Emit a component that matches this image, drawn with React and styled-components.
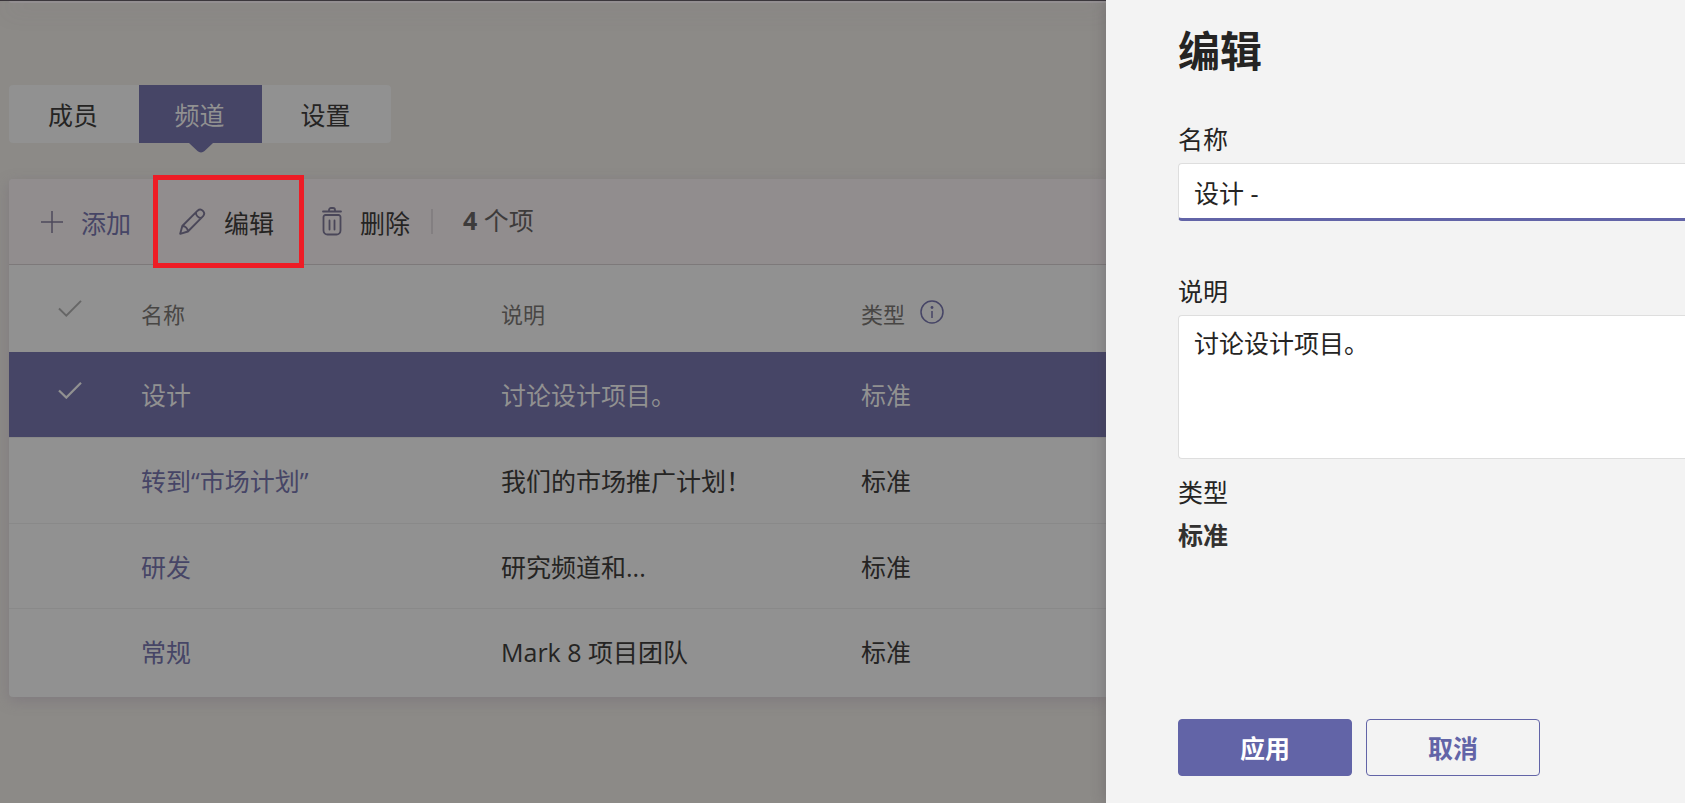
import React from "react";
import styled, { createGlobalStyle } from "styled-components";

const Global = createGlobalStyle`
  * { box-sizing: border-box; }
  body {
    margin: 0;
    background: #fff;
    color: #252423;
    font: 25px/34px "Open Sans", "Noto Sans CJK SC", sans-serif;
  }
  button, input, textarea { font: inherit; color: inherit; margin: 0; }
`;

const Page = styled.div`
  display: grid;
  grid-template-columns: minmax(0, 1106fr) minmax(0, 579fr);
  min-height: 100vh;
  overflow: hidden;
  border: solid #fff;
  border-width: 0 3px 1px 0;
`;

const Main = styled.main`
  display: flex;
  flex-direction: column;
  min-width: 0;
  overflow: hidden;
  background: #8c8a87;
`;

const TopBar = styled.div`
  height: 1px;
  background: #3a363b;
`;

const HeaderCard = styled.div`
  height: 2px;
  margin-left: 9px;
  border-bottom-left-radius: 4px;
  background: #938f91;
  box-shadow: 0 4px 20px rgba(110, 100, 115, 0.5);
`;

const Tabs = styled.div`
  display: flex;
  align-self: flex-start;
  margin: 82px 0 36px 9px;
  background: #919191;
  border-radius: 4px;
`;

const Tab = styled.button`
  position: relative;
  width: ${(p) => p.$width}px;
  height: 58px;
  padding: 2px 2px 0 0;
  border: 0;
  background: ${(p) => (p.$active ? "#464566" : "transparent")};
  color: ${(p) => (p.$active ? "#919191" : "#252423")};
`;

const TabArrow = styled.svg`
  position: absolute;
  top: 100%;
  left: 50%;
  margin-left: -12px;
  fill: #464566;
`;

const Card = styled.section`
  margin-left: 9px;
  background: #919191;
  border-radius: 4px 0 0 4px;
  box-shadow: 0 4px 14px rgba(110, 100, 115, 0.4);
`;

const Toolbar = styled.div`
  display: flex;
  align-items: center;
  height: 86px;
  background: #918d8e;
  border-bottom: 1px solid #7d797a;
  border-radius: 4px 0 0 0;
`;

const Action = styled.button`
  position: relative;
  display: flex;
  align-items: center;
  gap: 18px;
  height: 50px;
  padding: 2px 0 0;
  margin-left: ${(p) => p.$left}px;
  border: 0;
  background: none;
  color: ${(p) => (p.$accent ? "#464566" : "#252423")};
  svg { margin-top: -2px; }
`;

const Highlight = styled.span`
  position: absolute;
  inset: -22px -30px -21px -26px;
  border: 5px solid #ee1c25;
  pointer-events: none;
`;

const Divider = styled.span`
  width: 2px;
  height: 25px;
  margin-left: 21px;
  background: #837f81;
`;

const Count = styled.span`
  margin: 0 0 4px 30px;
  color: #3d3b3b;
  word-break: keep-all;
`;

const Table = styled.table`
  width: 100%;
  border-collapse: collapse;
  table-layout: fixed;
`;

const CheckCol = styled.col`
  width: 132px;
`;

const DataCol = styled.col`
  width: 360px;
`;

const HeadCell = styled.th`
  height: 87px;
  padding: 10px 0 0;
  text-align: left;
  font-size: 22px;
  font-weight: 400;
  color: #484644;
`;

const HeadLabel = styled.span`
  display: flex;
  align-items: center;
  gap: 15px;
  svg { margin-top: -4px; }
`;

const Row = styled.tr`
  height: ${(p) => p.$height}px;
  background: ${(p) => (p.$selected ? "#464566" : "transparent")};
  color: ${(p) => (p.$selected ? "#919191" : "#252423")};
  & + & { border-top: 1px solid #898989; }
  &:last-child td { padding-bottom: 4px; }
`;

const Cell = styled.td`
  padding: 2px 0 0;
  white-space: nowrap;
`;

const CheckCell = styled.td`
  padding: 0 0 8px 49px;
  line-height: 0;
  text-align: left;
`;

const HeadCheckCell = styled.th`
  padding: 0 0 0 49px;
  line-height: 0;
  text-align: left;
`;

const NameLink = styled.a`
  color: ${(p) => (p.$selected ? "inherit" : "#464566")};
  text-decoration: none;
`;

const Panel = styled.aside`
  position: relative;
  display: flex;
  flex-direction: column;
  min-width: 0;
  padding: 25px 0 27px 72px;
  background: #f3f3f3;
  box-shadow: 0 0 14px rgba(60, 50, 60, 0.3);
`;

const Title = styled.h1`
  margin: 0 0 45px;
  font-size: 42px;
  line-height: 52px;
  font-weight: 700;
`;

const Label = styled.label`
  margin-bottom: 7px;
`;

const TextInput = styled.input`
  height: 58px;
  margin-bottom: 53px;
  padding: 1px 15px 0;
  background: #fff;
  border: 1px solid #dedede;
  border-right: 0;
  border-bottom: 3px solid #6264a7;
  border-radius: 4px 0 0 4px;
  outline: 0;
`;

const TextBox = styled.textarea`
  height: 144px;
  margin-bottom: 16px;
  padding: 10px 15px;
  background: #fff;
  border: 1px solid #dedede;
  border-right: 0;
  border-radius: 4px 0 0 4px;
  outline: 0;
  resize: none;
`;

const TypeList = styled.dl`
  margin: 0;
  dt { margin-bottom: 9px; }
  dd { margin: 0; font-weight: 700; color: #323130; }
`;

const Buttons = styled.div`
  display: flex;
  gap: 14px;
  margin-top: auto;
`;

const Button = styled.button`
  width: 174px;
  height: 57px;
  border: 1px solid #6264a7;
  border-radius: 4px;
  font-weight: 700;
  background: ${(p) => (p.$primary ? "#6264a7" : "transparent")};
  color: ${(p) => (p.$primary ? "#fff" : "#6264a7")};
`;

const PlusIcon = () => (
  <svg width="22" height="22" viewBox="0 0 22 22" fill="none" stroke="#4d4a5c" strokeWidth="1.5">
    <path d="M11 0v22M0 11h22" />
  </svg>
);

const PencilIcon = () => (
  <svg width="27" height="27" viewBox="0 0 27 27" fill="none" stroke="#4a4759" strokeWidth="1.900" strokeLinejoin="round">
    <path d="M1.200 25.800 3.300 18 18.600 2.700a3.900 3.900 0 0 1 5.500 5.500L8.900 23.500ZM3.300 18a5.600 5.600 0 0 1 5.600 5.500M16.900 4.500a5.600 5.600 0 0 0 5.400 5.400" />
  </svg>
);

const TrashIcon = () => (
  <svg width="20" height="29" viewBox="0 0 20 29" fill="none" stroke="#4a4759" strokeWidth="1.800" strokeLinecap="round">
    <path d="M1 4.500h18M7 4.500V3a2 2 0 0 1 2-2h2a2 2 0 0 1 2 2v1.500M1.500 10v13.500a4 4 0 0 0 4 4h9a4 4 0 0 0 4-4V10a2 2 0 0 0-2-2h-13a2 2 0 0 0-2 2ZM7.500 13.500v9M12.500 13.500v9" />
  </svg>
);

const CheckIcon = ({ color, weight }) => (
  <svg width="24" height="17" viewBox="0 0 24 17" fill="none" stroke={color} strokeWidth={weight}>
    <path d="M1 8.500 8.300 15.600 23 .8" />
  </svg>
);

const InfoIcon = () => (
  <svg width="24" height="24" viewBox="0 0 24 24" fill="none" stroke="#464566" strokeWidth="1.5">
    <circle cx="12" cy="12" r="11" />
    <path d="M12 11v7" />
    <circle cx="12" cy="7.500" r="1.400" fill="#464566" stroke="none" />
  </svg>
);

const channels = [
  { name: "设计", description: "讨论设计项目。", selected: true, height: 85 },
  { name: "转到“市场计划”", description: "我们的市场推广计划！", height: 86 },
  { name: "研发", description: "研究频道和...", height: 85 },
  { name: "常规", description: "Mark 8 项目团队", height: 89 },
];

export default function App() {
  return (
    <Page lang="zh-CN">
      <Global />
      <Main>
        <TopBar />
        <HeaderCard />
        <Tabs role="tablist">
          <Tab role="tab" $width={130}>成员</Tab>
          <Tab role="tab" $width={123} $active aria-selected="true">
            频道
            <TabArrow width="24" height="10" viewBox="0 0 24 10">
              <path d="M0 0h24l-8.500 8a5 5 0 0 1-7 0Z" />
            </TabArrow>
          </Tab>
          <Tab role="tab" $width={129}>设置</Tab>
        </Tabs>
        <Card>
          <Toolbar>
            <Action $left={32} $accent><PlusIcon />添加</Action>
            <Action $left={48}><PencilIcon />编辑<Highlight /></Action>
            <Action $left={48}><TrashIcon />删除</Action>
            <Divider />
            <Count><b>4</b> 个项</Count>
          </Toolbar>
          <Table>
            <colgroup>
              <CheckCol />
              <DataCol />
              <DataCol />
              <col />
            </colgroup>
            <thead>
              <tr>
                <HeadCheckCell><CheckIcon color="#666" weight={1.9} /></HeadCheckCell>
                <HeadCell>名称</HeadCell>
                <HeadCell>说明</HeadCell>
                <HeadCell><HeadLabel>类型<InfoIcon /></HeadLabel></HeadCell>
              </tr>
            </thead>
            <tbody>
              {channels.map((c) => (
                <Row key={c.name} $selected={c.selected} $height={c.height}>
                  <CheckCell>{c.selected && <CheckIcon color="#919191" weight={2.2} />}</CheckCell>
                  <Cell><NameLink href="#" $selected={c.selected}>{c.name}</NameLink></Cell>
                  <Cell>{c.description}</Cell>
                  <Cell>标准</Cell>
                </Row>
              ))}
            </tbody>
          </Table>
        </Card>
      </Main>
      <Panel>
        <Title>编辑</Title>
        <Label htmlFor="channel-name">名称</Label>
        <TextInput id="channel-name" defaultValue="设计 -" />
        <Label htmlFor="channel-description">说明</Label>
        <TextBox id="channel-description" defaultValue="讨论设计项目。" />
        <TypeList>
          <dt>类型</dt>
          <dd>标准</dd>
        </TypeList>
        <Buttons>
          <Button $primary>应用</Button>
          <Button>取消</Button>
        </Buttons>
      </Panel>
    </Page>
  );
}
